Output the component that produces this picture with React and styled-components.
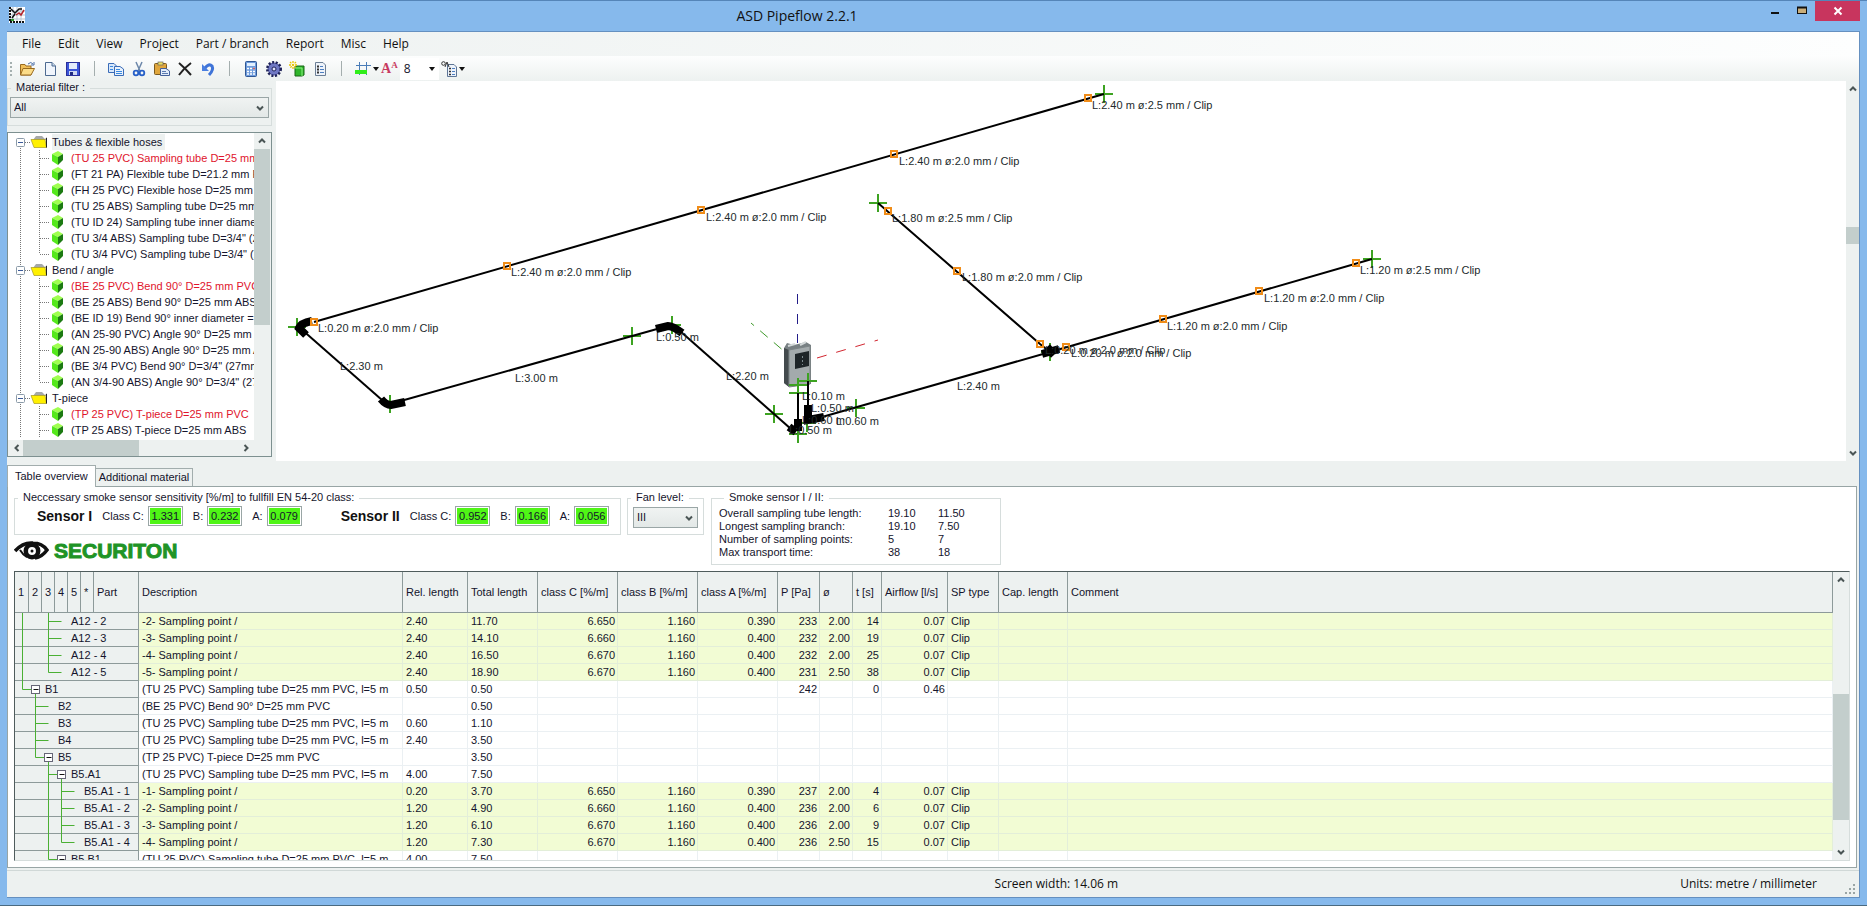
import React from 'react';
import styled, { createGlobalStyle } from 'styled-components';

const materialGroups = [
  {
    name: 'Tubes & flexible hoses',
    items: [
      '(TU 25 PVC) Sampling tube D=25 mm PVC',
      '(FT 21 PA) Flexible tube D=21.2 mm PA',
      '(FH 25 PVC) Flexible hose D=25 mm PVC',
      '(TU 25 ABS) Sampling tube D=25 mm ABS',
      '(TU ID 24) Sampling tube inner diameter',
      '(TU 3/4 ABS) Sampling tube D=3/4" (27mm)',
      '(TU 3/4 PVC) Sampling tube D=3/4" (27mm)',
    ],
  },
  {
    name: 'Bend / angle',
    items: [
      '(BE 25 PVC) Bend 90° D=25 mm PVC',
      '(BE 25 ABS) Bend 90° D=25 mm ABS',
      '(BE ID 19) Bend 90° inner diameter = 19',
      '(AN 25-90 PVC) Angle 90° D=25 mm PVC',
      '(AN 25-90 ABS) Angle 90° D=25 mm ABS',
      '(BE 3/4 PVC) Bend 90° D=3/4" (27mm)',
      '(AN 3/4-90 ABS) Angle 90° D=3/4" (27mm)',
    ],
  },
  {
    name: 'T-piece',
    more: true,
    items: [
      '(TP 25 PVC) T-piece D=25 mm PVC',
      '(TP 25 ABS) T-piece D=25 mm ABS',
    ],
  },
];

const columns = [
  { label: 'Description', width: 264 },
  { label: 'Rel. length', width: 65 },
  { label: 'Total length', width: 70 },
  { label: 'class C [%/m]', width: 80, right: true },
  { label: 'class B [%/m]', width: 80, right: true },
  { label: 'class A [%/m]', width: 80, right: true },
  { label: 'P [Pa]', width: 42, right: true },
  { label: 'ø', width: 33, right: true },
  { label: 't [s]', width: 29, right: true },
  { label: 'Airflow [l/s]', width: 66, right: true },
  { label: 'SP type', width: 51 },
  { label: 'Cap. length', width: 69 },
  { label: 'Comment' },
];

const TUBE = '(TU 25 PVC) Sampling tube D=25 mm PVC, l=5 m';

// through: guide columns that run the full row, from: column the branch leaves
const parts = [
  { name: 'A12 - 2', through: [0, 2], from: 2, point: true, cells: ['-2- Sampling point /', '2.40', '11.70', '6.650', '1.160', '0.390', '233', '2.00', '14', '0.07', 'Clip'] },
  { name: 'A12 - 3', through: [0, 2], from: 2, point: true, cells: ['-3- Sampling point /', '2.40', '14.10', '6.660', '1.160', '0.400', '232', '2.00', '19', '0.07', 'Clip'] },
  { name: 'A12 - 4', through: [0, 2], from: 2, point: true, cells: ['-4- Sampling point /', '2.40', '16.50', '6.670', '1.160', '0.400', '232', '2.00', '25', '0.07', 'Clip'] },
  { name: 'A12 - 5', through: [0], from: 2, point: true, cells: ['-5- Sampling point /', '2.40', '18.90', '6.670', '1.160', '0.400', '231', '2.50', '38', '0.07', 'Clip'] },
  { name: 'B1', through: [], from: 0, box: true, cells: [TUBE, '0.50', '0.50', '', '', '', '242', '', '0', '0.46'] },
  { name: 'B2', through: [1], from: 1, cells: ['(BE 25 PVC) Bend 90° D=25 mm PVC', '', '0.50'] },
  { name: 'B3', through: [1], from: 1, cells: [TUBE, '0.60', '1.10'] },
  { name: 'B4', through: [1], from: 1, cells: [TUBE, '2.40', '3.50'] },
  { name: 'B5', through: [], from: 1, box: true, cells: ['(TP 25 PVC) T-piece D=25 mm PVC', '', '3.50'] },
  { name: 'B5.A1', through: [2], from: 2, box: true, cells: [TUBE, '4.00', '7.50'] },
  { name: 'B5.A1 - 1', through: [2, 3], from: 3, point: true, cells: ['-1- Sampling point /', '0.20', '3.70', '6.650', '1.160', '0.390', '237', '2.00', '4', '0.07', 'Clip'] },
  { name: 'B5.A1 - 2', through: [2, 3], from: 3, point: true, cells: ['-2- Sampling point /', '1.20', '4.90', '6.660', '1.160', '0.400', '236', '2.00', '6', '0.07', 'Clip'] },
  { name: 'B5.A1 - 3', through: [2, 3], from: 3, point: true, cells: ['-3- Sampling point /', '1.20', '6.10', '6.670', '1.160', '0.400', '236', '2.00', '9', '0.07', 'Clip'] },
  { name: 'B5.A1 - 4', through: [2], from: 3, point: true, cells: ['-4- Sampling point /', '1.20', '7.30', '6.670', '1.160', '0.400', '236', '2.50', '15', '0.07', 'Clip'] },
  { name: 'B5.B1', through: [], from: 2, box: true, cells: [TUBE, '4.00', '7.50'] },
];

const sensors = [
  { name: 'Sensor I', values: { 'Class C:': '1.331', 'B:': '0.232', 'A:': '0.079' } },
  { name: 'Sensor II', values: { 'Class C:': '0.952', 'B:': '0.166', 'A:': '0.056' } },
];

const smokeStats = [
  ['Overall sampling tube length:', '19.10', '11.50'],
  ['Longest sampling branch:', '19.10', '7.50'],
  ['Number of sampling points:', '5', '7'],
  ['Max transport time:', '38', '18'],
];

const pipes = [
  'M828 13 L38 241',
  'M24 247 L106 319',
  'M114 323 L381 248',
  'M404 250 L515 348',
  'M522 312 V340',
  'M532 300 V326',
  'M546 336 L774 271 L1096 178',
  'M602 122 L764 263 L774 271',
];

const bends = [
  'M36 240 Q25 242 23 247 L30 254',
  'M105 318 Q110 324 115 324 L129 321',
  'M380 248 L392 245 Q397 245 406 252',
  'M513 346 L520 351 M522 338 V350',
  'M532 324 V339 L548 336',
  'M766 273 L783 268 M771 266 L778 274',
];

const crosses = [
  [828, 13], [21, 246], [114, 323], [356, 255], [396, 244], [498, 333], [522, 353], [522, 304],
  [522, 312], [532, 300], [531, 342], [580, 327], [774, 271], [602, 122], [1096, 178],
];

const points = [
  [38, 241], [231, 185], [425, 129], [618, 73], [812, 17], [612, 130],
  [681, 190], [764, 263], [790, 266], [887, 238], [983, 210], [1080, 182],
];

const labels = [
  [816, 28, 'L:2.40 m ø:2.5 mm / Clip'],
  [623, 84, 'L:2.40 m ø:2.0 mm / Clip'],
  [430, 140, 'L:2.40 m ø:2.0 mm / Clip'],
  [235, 195, 'L:2.40 m ø:2.0 mm / Clip'],
  [42, 251, 'L:0.20 m ø:2.0 mm / Clip'],
  [616, 141, 'L:1.80 m ø:2.5 mm / Clip'],
  [686, 200, 'L:1.80 m ø:2.0 mm / Clip'],
  [1084, 193, 'L:1.20 m ø:2.5 mm / Clip'],
  [988, 221, 'L:1.20 m ø:2.0 mm / Clip'],
  [891, 249, 'L:1.20 m ø:2.0 mm / Clip'],
  [795, 276, 'L:0.20 m ø:2.0 mm / Clip'],
  [769, 273, 'L:0.20 m ø:2.0 mm / Clip'],
  [64, 289, 'L:2.30 m'],
  [239, 301, 'L:3.00 m'],
  [380, 260, 'L:0.50 m'],
  [450, 299, 'L:2.20 m'],
  [681, 309, 'L:2.40 m'],
  [526, 319, 'L:0.10 m'],
  [535, 331, 'L:0.50 m'],
  [526, 343, 'L:0.60 m'],
  [560, 344, 'L:0.60 m'],
  [513, 353, 'L:0.50 m'],
];

function Chevron({ dir = 'down' }) {
  const turn = { down: 0, up: 180, left: 90, right: 270 }[dir];
  return (
    <svg width="8" height="8" viewBox="0 0 8 8" aria-hidden="true">
      <path d="M1 2.5 L4 5.5 L7 2.5" fill="none" stroke="#4a5555" strokeWidth="2" transform={`rotate(${turn} 4 4)`} />
    </svg>
  );
}

function ScrollBar({ label, horizontal, noEnd, before, thumb, after, width = 16 }) {
  return (
    <Track $horizontal={horizontal} $width={width}>
      <ArrowButton aria-label={`${label} back`}><Chevron dir={horizontal ? 'left' : 'up'} /></ArrowButton>
      <div style={{ flexGrow: before }} />
      <Thumb style={{ flexGrow: thumb }} />
      <div style={{ flexGrow: after }} />
      {!noEnd && (
        <ArrowButton aria-label={`${label} forward`}><Chevron dir={horizontal ? 'right' : 'down'} /></ArrowButton>
      )}
    </Track>
  );
}

function Drop() {
  return <svg width="6" height="4" viewBox="0 0 6 4" aria-hidden="true"><path d="M0 0 H6 L3 4 Z" fill="#111" /></svg>;
}

const icons = {
  Open: (
    <>
      <path d="M1.500 3.500 H6 L7 5 H12 V14 H1.500 Z" fill="#f0bf58" stroke="#9a6b20" />
      <path d="M4 7.500 H15.500 L12 14 H1.500 Z" fill="#fbdc88" stroke="#9a6b20" />
      <path d="M9 3 Q12 0 14 3 M15 1 V4 H12" fill="none" stroke="#4a6fa8" />
    </>
  ),
  New: (
    <>
      <path d="M3.500 1.500 H10 L13.500 5 V14.500 H3.500 Z" fill="#f0f5fc" stroke="#4d6a90" />
      <path d="M10 1.500 V5 H13.500" fill="#c9d8ea" stroke="#4d6a90" />
    </>
  ),
  Save: (
    <>
      <rect x="1.500" y="1.500" width="13" height="13" fill="#3b55d8" stroke="#2a2f9a" />
      <rect x="4" y="2" width="8" height="6" fill="#e4ecfb" />
      <rect x="4" y="10" width="8" height="4" fill="#cfd8f2" />
      <rect x="5" y="11" width="3" height="3" fill="#1f2a80" />
    </>
  ),
  Copy: (
    <>
      <path d="M0.500 2.500 H6 L8.500 5 V11.500 H0.500 Z" fill="#d9e8fa" stroke="#3a6cb8" />
      <path d="M6.500 5.500 H12 L15.500 8 V14.500 H6.500 Z" fill="#eaf2fc" stroke="#3a6cb8" />
      <path d="M2 5.500 H5 M2 8.500 H5 M8 8.500 H12 M8 10.500 H14 M8 12.500 H14" stroke="#3a8ae0" />
    </>
  ),
  Cut: (
    <>
      <path d="M5 1 L9 10 M11 1 L7 10" stroke="#6c87aa" strokeWidth="1.500" />
      <circle cx="5" cy="12" r="2.300" fill="none" stroke="#2760c8" strokeWidth="1.800" />
      <circle cx="11" cy="12" r="2.300" fill="none" stroke="#2760c8" strokeWidth="1.800" />
    </>
  ),
  Paste: (
    <>
      <rect x="0.500" y="2.500" width="12" height="11" rx="1" fill="#e0a63c" stroke="#7a5a20" />
      <rect x="4" y="1" width="5" height="3" fill="#f0e060" stroke="#666" strokeWidth="0.700" />
      <path d="M6.500 7.500 H12 L15.500 10 V14.500 H6.500 Z" fill="#e2ecfa" stroke="#44609a" />
      <path d="M8 10.500 H12 M8 12.500 H14" stroke="#5a7ab0" />
    </>
  ),
  Delete: <path d="M2 2 Q8 7 14 14 M14 2 Q7 7 2 14" fill="none" stroke="#222" strokeWidth="2" />,
  Undo: (
    <>
      <path d="M5 7 Q9 2 12 5 Q14 9 9 14" fill="none" stroke="#3f74d8" strokeWidth="3" />
      <path d="M2 3 V10 H9 Z" fill="#4a7fe0" />
    </>
  ),
  Calculate: (
    <>
      <rect x="2.500" y="0.500" width="11" height="15" rx="1" fill="#6f9cdc" stroke="#2f5795" />
      <rect x="4" y="2" width="8" height="3" fill="#e2f0ff" />
      <path d="M4 7.500 H12 M4 10.500 H12 M4 13 H12" stroke="#fff" strokeWidth="1.500" strokeDasharray="2 1" />
      <path d="M10 7.500 H12" stroke="#d06060" strokeWidth="1.500" />
    </>
  ),
  Settings: (
    <>
      <circle cx="8" cy="8" r="6.500" fill="#5a60b0" stroke="#1f2258" strokeWidth="3" strokeDasharray="2 1.500" />
      <circle cx="8" cy="8" r="5.500" fill="#7078c4" />
      <circle cx="8" cy="8" r="2" fill="#dfe3ff" stroke="#1f2258" />
    </>
  ),
  'Add part': (
    <>
      <path d="M6 6 L8 5 H15 V14 L13 15 H6 Z" fill="#2fb52a" stroke="#176414" />
      <path d="M6 7 H13 V15" fill="none" stroke="#8bf080" />
      <path d="M4 0 V8 M0 4 H8 M1 1 L7 7 M7 1 L1 7" stroke="#e8c400" strokeWidth="1.300" strokeDasharray="2 1" />
    </>
  ),
  Properties: (
    <>
      <path d="M3.500 1.500 H11 L13.500 4 V14.500 H3.500 Z" fill="#eef3fa" stroke="#6c7f96" />
      <path d="M5 5.500 H7 M5 8.500 H7 M5 11.500 H7" stroke="#333" strokeWidth="2" />
      <path d="M8 5.500 H11 M8 8.500 H12 M8 11.500 H12" stroke="#4d7fc0" />
    </>
  ),
  Grid: (
    <>
      <path d="M4.500 1 V14 M11.500 1 V14 M1 4.500 H16" stroke="#4a7cb8" />
      <rect x="0" y="9" width="12" height="4" fill="#30ee1a" />
    </>
  ),
  Options: (
    <>
      <path d="M6.500 3.500 H13 L15.500 6 V15.500 H6.500 Z" fill="#eef3fa" stroke="#5d7595" />
      <path d="M8 7.500 H10 M8 10.500 H10 M8 13.500 H10" stroke="#333" strokeWidth="1.500" />
      <path d="M11 7.500 H14 M11 10.500 H14 M11 13.500 H14" stroke="#4d7fc0" />
      <circle cx="2.500" cy="2.500" r="1.800" fill="none" stroke="#333" />
      <path d="M4 6 L6 1 L8 6" fill="none" stroke="#333" />
    </>
  ),
};

function Tool({ name, drop }) {
  return (
    <ToolButton aria-label={name}>
      <svg width="16" height="16" viewBox="0 0 16 16">{icons[name]}</svg>
      {drop && <Drop />}
    </ToolButton>
  );
}

function TitleBar() {
  return (
    <Title>
      <svg width="16" height="16" viewBox="0 0 16 16" aria-hidden="true">
        <rect width="16" height="16" fill="#fff" />
        <path d="M4 0 V16 M8 0 V16 M12 0 V16 M0 4 H16 M0 8 H16 M0 12 H16" stroke="#b9c4cf" />
        <path d="M1 0 V15 H16" fill="none" stroke="#111" strokeWidth="2" strokeDasharray="2 1" />
        <path d="M2 2 L6 6 L10 2 H13 M3 11 L6 7" fill="none" stroke="#111" strokeWidth="1.500" />
        <path d="M7 8 L10 6 L12 8 L15 3" fill="none" stroke="#b3242c" strokeWidth="1.500" />
        <path d="M2 13 H5" stroke="#2c9a2c" strokeWidth="2" />
      </svg>
      <TitleText>ASD Pipeflow 2.2.1</TitleText>
      <WindowButton aria-label="Minimize">
        <svg width="10" height="10" viewBox="0 0 10 10"><rect x="1" y="6" width="8" height="2" fill="#111" /></svg>
      </WindowButton>
      <WindowButton aria-label="Maximize">
        <svg width="10" height="10" viewBox="0 0 10 10">
          <rect x="0.500" y="1.500" width="9" height="6" fill="#c9ae7a" stroke="#111" />
          <path d="M0 1.500 H10" stroke="#111" strokeWidth="2" />
        </svg>
      </WindowButton>
      <CloseButton aria-label="Close">
        <svg width="10" height="10" viewBox="0 0 10 10"><path d="M1.500 1.500 L8.500 8.500 M8.500 1.500 L1.500 8.500" stroke="#fff" strokeWidth="2" /></svg>
      </CloseButton>
    </Title>
  );
}

function ToolBar() {
  return (
    <Tools>
      <Grip width="3" height="16" viewBox="0 0 3 16" aria-hidden="true">
        <path d="M1 1 V16" stroke="#a5b0b0" strokeWidth="2" strokeDasharray="2 2" />
      </Grip>
      <Tool name="Open" />
      <Tool name="New" />
      <Tool name="Save" />
      <Separator />
      <Tool name="Copy" />
      <Tool name="Cut" />
      <Tool name="Paste" />
      <Tool name="Delete" />
      <Tool name="Undo" />
      <Separator />
      <Tool name="Calculate" />
      <Tool name="Settings" />
      <Tool name="Add part" />
      <Tool name="Properties" />
      <Separator />
      <DropTools>
        <Tool name="Grid" drop />
        <FontButton aria-label="Font size">A<sup>A</sup></FontButton>
        <SizeBox>
          <SizeSelect aria-label="Label size" defaultValue="8"><option>8</option></SizeSelect>
          <Drop />
        </SizeBox>
        <Tool name="Options" drop />
      </DropTools>
    </Tools>
  );
}

function Materials() {
  return (
    <Side>
      <Group>
        <Legend><label htmlFor="material">Material filter :</label></Legend>
        <SelectBox>
          <Select id="material" defaultValue="All"><option>All</option></Select>
          <Chevron />
        </SelectBox>
      </Group>
      <TreeBox>
        <TreeRows>
          {materialGroups.map((group, g) => (
            <React.Fragment key={group.name}>
              <TreeRow>
                <svg width="43" height="16" viewBox="0 0 43 16" aria-hidden="true">
                  <path d={g === 0 ? 'M11.500 8 V16' : 'M11.500 0 V16'} stroke="#777" strokeDasharray="1 1" />
                  <path d="M16 8.500 H22" stroke="#777" strokeDasharray="1 1" />
                  <rect x="7.500" y="4.500" width="8" height="8" rx="1" fill="#fff" stroke="#8a9aa8" />
                  <path d="M9 8.500 H14" stroke="#3a5a9a" />
                  <path d="M24 6 L27 2 H33 L36 5 L38 3 V6 Z" fill="#a5a8a8" />
                  <path d="M22 5.500 H36 L37.500 13.500 H25 Z" fill="#fff000" stroke="#a89a20" strokeWidth="0.700" />
                  <path d="M37.500 4 V13.500" fill="none" stroke="#222" />
                </svg>
                <TreeName $active={g === 0}>{group.name}</TreeName>
              </TreeRow>
              {group.items.map((item, i) => (
                <TreeRow key={item}>
                  <svg width="62" height="16" viewBox="0 0 62 16" aria-hidden="true">
                    <path d="M11.500 0 V16" stroke="#777" strokeDasharray="1 1" />
                    <path d={i === group.items.length - 1 && !group.more ? 'M30.500 0 V8' : 'M30.500 0 V16'} stroke="#777" strokeDasharray="1 1" />
                    <path d="M31 8.500 H41" stroke="#777" strokeDasharray="1 1" />
                    <path d="M43 4 L49 1 L54 4 L49 7 Z" fill="#a0ff50" />
                    <path d="M43 4 L49 7 V15 L43 11 Z" fill="#55e81c" />
                    <path d="M54 4 L49 7 V15 L54 10 Z" fill="#1c7a12" />
                  </svg>
                  <TreeName $red={i === 0}>{item}</TreeName>
                </TreeRow>
              ))}
            </React.Fragment>
          ))}
        </TreeRows>
        <ScrollBar label="Materials" noEnd before={0} thumb={175} after={114} />
        <ScrollBar label="Materials sideways" horizontal before={0} thumb={112} after={97} />
      </TreeBox>
    </Side>
  );
}

function Drawing() {
  return (
    <Canvas>
      <Plan role="img" aria-label="Pipe network">
        <path d="M521.500 213 V262" stroke="#221c88" strokeDasharray="10 10" />
        <path d="M475 242 L509 271" stroke="#3f9a2c" strokeDasharray="10 8" strokeDashoffset="6" />
        <path d="M541 277 L602 259" stroke="#d22630" strokeDasharray="10 10" />
        {crosses.map(([x, y]) => (
          <path key={`${x}-${y}`} d={`M${x - 9} ${y} H${x + 9} M${x} ${y - 9} V${y + 9}`} stroke="#3da321" strokeWidth="2" />
        ))}
        <path d="M508 267 L511 262 L518 264 L530 261 L535 264 V303 L513 306 L508 302 Z" fill="#788083" />
        <path d="M508 267 L513 269 V306 L508 302 Z" fill="#434a4d" />
        <path d="M513 269 L534 265 V303 L513 306 Z" fill="#a3aaac" stroke="#7c8486" />
        <path d="M519 273 L533 270 V285 L519 288 Z" fill="#1e2528" />
        <path d="M512 265 L519 263 M524 264 L530 261" stroke="#d4d9da" strokeWidth="2" />
        <path d="M526.500 275 V284" stroke="#7e8b90" strokeDasharray="2 2" />
        <path d="M522 297 V312 M513 304 H531 M523 300 H541 M532 292 V302" stroke="#3da321" strokeWidth="2" />
        {pipes.map((d) => <path key={d} d={d} fill="none" stroke="#000" strokeWidth="2" />)}
        {bends.map((d) => <path key={d} d={d} fill="none" stroke="#000" strokeWidth="8" />)}
        {points.map(([x, y]) => (
          <rect key={`${x}-${y}`} x={x - 3} y={y - 3} width="6" height="6" fill="none" stroke="#f08c18" strokeWidth="2" />
        ))}
        {labels.map(([x, y, text]) => <PlanLabel key={`${x}-${y}`} x={x} y={y}>{text}</PlanLabel>)}
      </Plan>
      <ScrollBar label="Drawing" width={13} before={129} thumb={17} after={200} />
    </Canvas>
  );
}

function SensorSummary() {
  return (
    <Summary>
      <div>
        <GroupRow>
          <Group $width={607} $height={44}>
            <Legend>Neccessary smoke sensor sensitivity [%/m] to fullfill EN 54-20 class:</Legend>
            <SensorRow>
              {sensors.map((sensor) => (
                <Sensor key={sensor.name}>
                  <SensorName>{sensor.name}</SensorName>
                  {Object.entries(sensor.values).map(([label, value]) => (
                    <ValueLabel key={label}>
                      {label}
                      <ValueBox readOnly value={value} />
                    </ValueLabel>
                  ))}
                </Sensor>
              ))}
            </SensorRow>
          </Group>
          <Group $width={77} $height={44}>
            <Legend><label htmlFor="fan">Fan level:</label></Legend>
            <FanBox>
              <Select id="fan" defaultValue="III"><option>III</option></Select>
              <Chevron />
            </FanBox>
          </Group>
        </GroupRow>
        <Logo>
          <svg width="35" height="20" viewBox="0 0 35 20" aria-hidden="true">
            <path d="M1 11 Q9 2 19 3 Q28 3 33 10 Q28 17 21 18" fill="none" stroke="#111" strokeWidth="3.500" />
            <circle cx="18" cy="11" r="6.200" fill="#fff" stroke="#111" strokeWidth="4.500" />
            <circle cx="18" cy="11" r="1.500" fill="#111" />
            <path d="M6 10 Q9 15 13 17" fill="none" stroke="#111" strokeWidth="2" />
          </svg>
          SECURITON
        </Logo>
      </div>
      <Group $width={290} $height={74}>
        <Legend $pad={10}>Smoke sensor I / II:</Legend>
        <Stats>
          <tbody>
            {smokeStats.map(([name, first, second]) => (
              <tr key={name}>
                <th scope="row">{name}</th>
                <td>{first}</td>
                <td>{second}</td>
              </tr>
            ))}
          </tbody>
        </Stats>
      </Group>
    </Summary>
  );
}

function Branch({ part }) {
  const x = (col) => col * 13 + 7.5;
  const end = part.from + 1;
  return (
    <svg width={end * 13 + 17} height="17" aria-hidden="true">
      <g fill="none" stroke="#4bb034">
        {part.through.map((col) => <path key={col} d={`M${x(col)} 0 V17`} />)}
        <path d={`M${x(part.from)} 0 V8.500 H${x(end)}`} />
        {part.box && <path d={`M${x(end)} 8 V17`} />}
      </g>
      {part.box && (
        <>
          <rect x={x(end) - 4} y="4.500" width="8" height="8" fill="#fff" stroke="#667" />
          <path d={`M${x(end) - 2} 8.500 H${x(end) + 3}`} stroke="#111" />
        </>
      )}
    </svg>
  );
}

function PartTable() {
  return (
    <TableBox>
      <TableScroll>
        <Table>
          <colgroup>
            {[14, 13, 13, 13, 13, 13, 45].map((width, i) => <col key={i} width={width} />)}
            {columns.map((col) => <col key={col.label} width={col.width} />)}
          </colgroup>
          <thead>
            <tr>
              {['1', '2', '3', '4', '5', '*', 'Part'].map((text) => <Head key={text}>{text}</Head>)}
              {columns.map((col) => <Head key={col.label}>{col.label}</Head>)}
            </tr>
          </thead>
          <tbody>
            {parts.map((part) => (
              <Row key={part.name} $point={part.point}>
                <PartCell colSpan={7}>
                  <PartName><Branch part={part} />{part.name}</PartName>
                </PartCell>
                {columns.map((col, i) => (
                  <Cell key={col.label} $right={col.right}>{part.cells[i]}</Cell>
                ))}
              </Row>
            ))}
          </tbody>
        </Table>
      </TableScroll>
      <ScrollBar label="Parts" before={106} thumb={126} after={24} />
    </TableBox>
  );
}

function App() {
  return (
    <Window>
      <GlobalStyle />
      <TitleBar />
      <Client>
        <Menu>
          {['File', 'Edit', 'View', 'Project', 'Part / branch', 'Report', 'Misc', 'Help'].map((item) => (
            <MenuItem key={item}>{item}</MenuItem>
          ))}
        </Menu>
        <ToolBar />
        <Upper>
          <Materials />
          <Drawing />
        </Upper>
        <Tabs role="tablist">
          <Tab role="tab" aria-selected="true" $active>Table overview</Tab>
          <Tab role="tab" aria-selected="false">Additional material</Tab>
        </Tabs>
        <Panel>
          <SensorSummary />
          <PartTable />
        </Panel>
        <Status>
          <span>Screen width: 14.06 m</span>
          <span>Units: metre / millimeter</span>
          <svg width="11" height="11" viewBox="0 0 11 11" aria-hidden="true">
            <path d="M8 0h2v2h-2z M4 4h2v2h-2z M8 4h2v2h-2z M0 8h2v2h-2z M4 8h2v2h-2z M8 8h2v2h-2z" fill="#9aa5a5" />
          </svg>
        </Status>
      </Client>
    </Window>
  );
}

/* STYLED COMPONENTS */
const GlobalStyle = createGlobalStyle`
  * {
    box-sizing: border-box;
  }

  body {
    margin: 0;
    font: 11px/13px "Liberation Sans", Arial, sans-serif;
    color: #14142c;
  }

  button, input, select {
    margin: 0;
    padding: 0;
    border: 0;
    border-radius: 0;
    background: none;
    font: inherit;
    color: inherit;
  }

  svg {
    display: block;
    flex: none;
  }
`

const Window = styled.div`
  display: flex;
  flex-direction: column;
  height: 100vh;
  padding: 0 7px;
  background-color: #86b9ec;
  border-top: 1px solid #5585b8;
  border-bottom: 1px solid #4a6a80;
`

const Title = styled.header`
  display: flex;
  align-items: flex-start;
  height: 30px;
  padding-left: 2px;

  > svg {
    margin-top: 6px;
  }
`

const TitleText = styled.h1`
  flex: 1;
  margin: 0;
  padding: 5px 192px 0 0;
  font: 400 14px/20px "Open Sans", sans-serif;
  text-align: center;
  color: #111;
`

const WindowButton = styled.button`
  display: grid;
  place-items: center;
  width: 27px;
  height: 20px;
`

const CloseButton = styled(WindowButton)`
  width: 45px;
  background-color: #c8355e;
`

const Client = styled.main`
  flex: 1;
  min-height: 0;
  display: flex;
  flex-direction: column;
  margin-bottom: 7px;
  border: 1px solid #6590c0;
  border-left: 0;
  background-color: #edf1f0;
`

const Menu = styled.nav`
  display: flex;
  flex: none;
  gap: 17px;
  height: 24px;
  padding-left: 15px;
  background: linear-gradient(90deg, #edf1f0, #fdfefe);
`

const MenuItem = styled.button`
  font: 12px/24px "Open Sans", sans-serif;
  color: #111;
`

const Tools = styled.div`
  display: flex;
  align-items: center;
  flex: none;
  gap: 7px;
  height: 25px;
  padding-left: 3px;
  background: linear-gradient(#fdfefe, #edf1f0);
`

const Grip = styled.svg`
  margin-right: -1px;
`

const ToolButton = styled.button`
  display: flex;
  align-items: center;
  gap: 2px;
`

const Separator = styled.i`
  width: 1px;
  height: 15px;
  margin: 0 6px;
  background-color: #a4aeae;
`

const DropTools = styled.div`
  display: flex;
  align-items: center;
  gap: 2px;
`

const FontButton = styled.button`
  display: flex;
  font: bold 14px/16px "Liberation Serif", serif;
  color: #c83a60;

  sup {
    font-size: 9px;
    line-height: 9px;
  }
`

const SizeBox = styled.div`
  display: grid;
  align-items: center;
  width: 39px;
  height: 22px;
  background-color: #fff;

  > * {
    grid-area: 1 / 1;
  }

  > svg {
    justify-self: end;
    margin-right: 4px;
    pointer-events: none;
  }
`

const SizeSelect = styled.select`
  height: 20px;
  padding-left: 4px;
  appearance: none;
  font: 12px/16px "Open Sans", sans-serif;
`

const Upper = styled.div`
  display: flex;
  flex: none;
  height: 380px;
`

const Side = styled.aside`
  display: flex;
  flex-direction: column;
  flex: none;
  gap: 6px;
  width: 269px;
  padding: 0 4px 4px 0;
`

const Group = styled.fieldset`
  min-width: 0;
  margin: 0;
  padding: 0 2px;
  border: 1px solid #d6dddc;
  width: ${({ $width }) => ($width ? `${$width}px` : 'auto')};
  height: ${({ $height }) => ($height ? `${$height}px` : '45px')};
`

const Legend = styled.legend`
  height: 14px;
  margin-left: ${({ $pad = 1 }) => $pad}px;
  padding: 0 5px;
`

const SelectBox = styled.div`
  display: grid;
  align-items: center;
  height: 21px;
  margin-top: 2px;
  background: linear-gradient(#f0f3f2, #e3e8e7);
  border: 1px solid #9aa6a6;

  > * {
    grid-area: 1 / 1;
  }

  > svg {
    justify-self: end;
    margin-right: 4px;
    pointer-events: none;
  }
`

const FanBox = styled(SelectBox)`
  width: 65px;
  margin-left: 3px;
`

const Select = styled.select`
  height: 19px;
  padding-left: 3px;
  appearance: none;
`

const TreeBox = styled.div`
  flex: 1;
  min-height: 0;
  display: grid;
  grid-template-columns: 1fr 16px;
  grid-template-rows: 1fr 16px;
  padding-right: 1px;
  border: 1px solid #7d9090;
  background-color: #edf1f0;
`

const TreeRows = styled.div`
  min-height: 0;
  padding: 1px 0 0 1px;
  overflow: hidden;
  background-color: #fff;
`

const TreeRow = styled.div`
  display: flex;
  height: 16px;
  line-height: 16px;
  white-space: nowrap;
`

const TreeName = styled.span`
  padding-right: 3px;
  color: ${({ $red }) => ($red ? '#e0142c' : 'inherit')};
  background-color: ${({ $active }) => ($active ? '#edf1f0' : 'transparent')};
`

const Track = styled.div`
  display: flex;
  flex: none;
  flex-direction: ${({ $horizontal }) => ($horizontal ? 'row' : 'column')};
  ${({ $horizontal, $width }) => ($horizontal ? `height: ${$width}px; padding: 0 2px;` : `width: ${$width}px;`)}
  background-color: #edf1f0;
`

const ArrowButton = styled.button`
  display: grid;
  flex: none;
  place-items: center;
  min-width: 13px;
  min-height: 16px;
`

const Thumb = styled.div`
  background-color: #c3cecc;
`

const Canvas = styled.section`
  flex: 1;
  display: flex;
  min-width: 0;
  background-color: #fff;
`

const Plan = styled.svg`
  flex: 1;
  min-width: 0;
  height: 100%;
`

const PlanLabel = styled.text`
  font-size: 11px;
  fill: #222a2c;
`

const Tabs = styled.div`
  display: flex;
  align-items: flex-end;
  flex: none;
  height: 25px;
  padding-top: 4px;
`

const Tab = styled.button`
  height: ${({ $active }) => ($active ? '22px' : '18px')};
  margin-bottom: ${({ $active }) => ($active ? '-1px' : '0')};
  padding: 0 ${({ $active }) => ($active ? '7px' : '3px')};
  border: 1px solid #a2adad;
  border-bottom: 0;
  border-left-width: ${({ $active }) => ($active ? '1px' : '0')};
  background-color: ${({ $active }) => ($active ? '#fff' : '#edf1f0')};
  z-index: ${({ $active }) => ($active ? 1 : 0)};
`

const Panel = styled.section`
  flex: 1;
  display: flex;
  flex-direction: column;
  min-height: 0;
  gap: 6px;
  margin-right: 2px;
  padding: 4px 6px 6px;
  border: 1px solid #98a5a5;
  background-color: #fff;
`

const Summary = styled.div`
  display: flex;
  flex: none;
  gap: 7px;
`

const GroupRow = styled.div`
  display: flex;
  gap: 6px;
`

const SensorRow = styled.div`
  display: flex;
  gap: 39px;
  padding: 1px 0 0 20px;
`

const Sensor = styled.div`
  display: flex;
  align-items: center;
  gap: 10px;
`

const SensorName = styled.strong`
  font-size: 14px;
  color: #111;
`

const ValueLabel = styled.label`
  display: flex;
  align-items: center;
  gap: 4px;
`

const ValueBox = styled.input`
  width: 35px;
  height: 20px;
  border: 1px solid #9aa6a6;
  outline: 1px solid #fff;
  outline-offset: -2px;
  background-color: #4ff516;
  text-align: center;
`

const Logo = styled.div`
  display: flex;
  align-items: center;
  gap: 5px;
  height: 20px;
  margin-top: 5px;
  font-size: 21px;
  font-weight: bold;
  color: #1f9426;
  -webkit-text-stroke: 1px #1f9426;
`

const Stats = styled.table`
  margin: 2px 0 0 5px;
  border-spacing: 0;
  table-layout: fixed;

  th {
    width: 169px;
    padding: 0;
    font-weight: 400;
    text-align: left;
  }

  td {
    width: 50px;
    padding: 0;
  }
`

const TableBox = styled.div`
  flex: 1;
  display: flex;
  min-height: 0;
  border: 1px solid #d6dddc;
  border-top: 1px solid #4f5c5c;
  border-left: 1px solid #4f5c5c;
`

const TableScroll = styled.div`
  flex: 1;
  min-width: 0;
  overflow: hidden;
`

const Table = styled.table`
  width: 100%;
  border-spacing: 0;
  table-layout: fixed;
  white-space: nowrap;
`

const Head = styled.th`
  height: 41px;
  padding: 0 0 0 3px;
  border-right: 1px solid #8d9a9a;
  border-bottom: 1px solid #8d9a9a;
  background-color: #edf1f0;
  font-weight: 400;
  text-align: left;
`

const Row = styled.tr`
  background-color: ${({ $point }) => ($point ? '#f2fcd4' : '#fff')};
`

const Cell = styled.td`
  height: 17px;
  padding: 0 2px 0 3px;
  border-right: 1px solid #e8edee;
  border-bottom: 1px solid #e8edee;
  border-color: rgba(205, 218, 225, 0.4);
  text-align: ${({ $right }) => ($right ? 'right' : 'left')};
`

const PartCell = styled.td`
  padding: 0;
  border-right: 1px solid #8d9a9a;
  background-color: #edf1f0;
  box-shadow: inset 0 -1px #8d9a9a;
`

const PartName = styled.div`
  display: flex;
  height: 17px;
  line-height: 16px;
`

const Status = styled.footer`
  display: grid;
  grid-template-columns: 60% 1fr 42px;
  align-items: center;
  flex: none;
  height: 27px;
  margin-top: 2px;
  border-top: 1px solid #d0d8d7;
  font: 12px/16px "Open Sans", sans-serif;
  color: #111;
  text-align: right;

  > svg {
    justify-self: end;
    align-self: end;
    margin: 0 3px 2px 0;
  }
`

export default App;
